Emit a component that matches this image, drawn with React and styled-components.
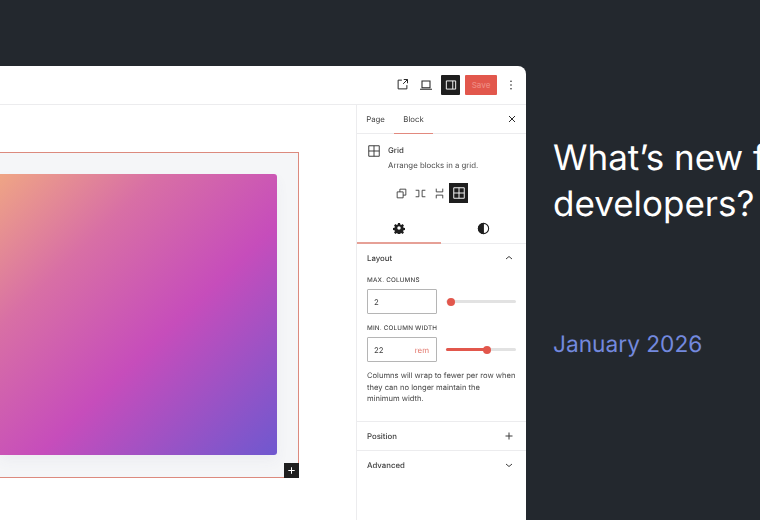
import React from "react";
import styled, { createGlobalStyle } from "styled-components";

const GlobalStyle = createGlobalStyle`
  html, body {
    margin: 0;
    padding: 0;
    background: #23282e;
  }
  * {
    box-sizing: border-box;
  }
`;

const Page = styled.div`
  display: flex;
  width: 760px;
  height: 520px;
  overflow: hidden;
  background: #23282e;
  font-family: Inter, "Liberation Sans", sans-serif;
  text-rendering: geometricPrecision;
`;

const EditorWindow = styled.div`
  display: flex;
  flex-direction: column;
  flex: none;
  width: 526px;
  margin-top: 66px;
  background: #fff;
  border-top-right-radius: 8px;
  overflow: hidden;
  filter: blur(0.3px);
`;

const TopBar = styled.div`
  display: flex;
  align-items: center;
  justify-content: flex-end;
  flex: none;
  height: 39px;
  padding: 0 5px 1px 0;
  border-bottom: 1px solid #ececee;
`;

const BarButton = styled.button`
  display: flex;
  align-items: center;
  justify-content: center;
  width: ${(p) => p.$width || 24}px;
  height: 20px;
  margin-left: ${(p) => p.$gap || 0}px;
  padding: 0;
  border: 0;
  border-radius: 1px;
  color: #2a2a2a;
  background: ${(p) => (p.$active ? "#1e1e1e" : "transparent")};
  ${(p) => p.$active && "color: #fff;"}
`;

const SaveButton = styled.button`
  width: 32px;
  height: 20px;
  margin: 0 4px 0 5px;
  padding: 0;
  border: 0;
  border-radius: 1px;
  background: #e2574c;
  color: #ee8b82;
  font: 500 8px Inter, sans-serif;
`;

const Workspace = styled.div`
  display: flex;
  flex: 1;
  min-height: 0;
`;

const Canvas = styled.div`
  flex: none;
  width: 357px;
  padding: 47px 57px 0 0;
  border-right: 1px solid #ececee;
`;

const GridBlock = styled.div`
  position: relative;
  height: 326px;
  padding: 21px 21px 20px 0;
  background: #f5f6f8;
  border: 1px solid #dc8a7e;
  border-left: 0;
`;

const Artwork = styled.div`
  height: 281px;
  border-radius: 0 3px 3px 0;
  background: linear-gradient(136deg, #efa585 0%, #d86fa5 28%, #c64dbb 58%, #6f58cf 100%);
  box-shadow: 0 6px 14px rgba(70, 70, 110, 0.05);
`;

const AddButton = styled.div`
  position: absolute;
  right: -1px;
  bottom: -1px;
  display: flex;
  align-items: center;
  justify-content: center;
  width: 15px;
  height: 15px;
  background: #1e1e1e;
  color: #fff;
`;

const Sidebar = styled.aside`
  flex: 1;
  min-width: 0;
  color: #2b2b2b;
  font-size: 7.8px;
`;

const TabRow = styled.div`
  display: flex;
  align-items: stretch;
  height: 29px;
  padding: 0 8px 0 0;
  border-bottom: 1px solid #ececee;
`;

const TextTab = styled.div`
  display: flex;
  align-items: center;
  justify-content: center;
  width: ${(p) => p.$width}px;
  margin-bottom: -1px;
  color: #444;
  border-bottom: 1px solid ${(p) => (p.$active ? "#e2897e" : "transparent")};
`;

const CloseWrap = styled.div`
  display: flex;
  align-items: center;
  margin-left: auto;
  color: #2a2a2a;
`;

const BlockCard = styled.div`
  display: grid;
  grid-template-columns: 20px 1fr;
  padding: 10px 0 0 11px;
  height: 82px;
`;

const BlockIcon = styled.div`
  color: #333;
  line-height: 0;
  margin-left: -1px;
`;

const BlockTitle = styled.div`
  font-weight: 500;
  color: #3a3a3a;
  margin-top: 1px;
  line-height: 11px;
`;

const BlockDesc = styled.div`
  margin-top: 4px;
  color: #4c4c4c;
  line-height: 11px;
  white-space: nowrap;
`;

const Variations = styled.div`
  display: flex;
  align-items: center;
  margin: 12px 0 0 4px;
`;

const VariationButton = styled.div`
  display: flex;
  align-items: center;
  justify-content: center;
  width: 19px;
  height: 20px;
  color: ${(p) => (p.$active ? "#fff" : "#333")};
  background: ${(p) => (p.$active ? "#1e1e1e" : "transparent")};
`;

const IconTabs = styled.div`
  display: flex;
  height: 28px;
  border-bottom: 1px solid #ececee;
`;

const IconTab = styled.div`
  display: flex;
  align-items: center;
  justify-content: center;
  flex: none;
  width: ${(p) => p.$width}px;
  margin-bottom: -1px;
  padding-bottom: 2px;
  color: #1e1e1e;
  border-bottom: 2px solid ${(p) => (p.$active ? "#e6a096" : "transparent")};
`;

const Panel = styled.section`
  padding: 0 10px;
  border-bottom: ${(p) => (p.$last ? "0" : "1px solid #ececee")};
`;

const PanelHead = styled.div`
  display: flex;
  align-items: center;
  justify-content: space-between;
  height: 28px;
  padding-right: 1px;
  font-weight: 500;
  color: #3d3d3d;
`;

const FieldLabel = styled.div`
  margin-top: ${(p) => p.$top || 0}px;
  font-size: 6.3px;
  font-weight: 500;
  line-height: 9px;
  letter-spacing: 0.2px;
  color: #4a4a4a;
`;

const FieldRow = styled.div`
  display: flex;
  align-items: center;
  gap: 9px;
  margin-top: 4px;
`;

const NumberBox = styled.div`
  display: flex;
  align-items: center;
  justify-content: space-between;
  flex: none;
  width: 70px;
  height: 25px;
  padding: 0 7px 0 6px;
  border: 1px solid #b5b5b5;
  border-radius: 1px;
  color: #444;
`;

const Unit = styled.span`
  color: #e2766b;
`;

const Slider = styled.div`
  position: relative;
  flex: none;
  width: 70px;
  height: 3px;
  border-radius: 2px;
  background: #e2e2e2;
`;

const SliderFill = styled.div`
  height: 100%;
  border-radius: 2px;
  background: #e2574c;
`;

const SliderThumb = styled.div`
  position: absolute;
  top: -2.5px;
  width: 8px;
  height: 8px;
  margin-left: -4px;
  border-radius: 50%;
  background: #e2574c;
`;

const HelpText = styled.p`
  margin: 8px 0 16px;
  font-size: 7.6px;
  line-height: 11.7px;
  white-space: nowrap;
  color: #474747;
`;

const Intro = styled.div`
  flex: none;
  width: 234px;
  padding: 131px 0 0 27px;
`;

const Headline = styled.h1`
  margin: 0;
  width: 300px;
  padding-top: 4px;
  font-size: 35px;
  font-weight: 400;
  line-height: 46px;
  color: #fff;
`;

const DateLine = styled.div`
  margin-top: 103px;
  font-size: 22.7px;
  line-height: 30px;
  color: #7389de;
`;

const Icon = ({ size = 12, children, fill = "none" }) => (
  <svg
    width={size}
    height={size}
    viewBox="0 0 24 24"
    fill={fill}
    stroke={fill === "none" ? "currentColor" : "none"}
    strokeWidth="1.6"
  >
    {children}
  </svg>
);

const GridIcon = ({ size }) => (
  <Icon size={size}>
    <path d="M3 3h18v18H3zM12 3v18M3 12h18" />
  </Icon>
);

const SliderField = ({ percent }) => (
  <Slider>
    {percent > 10 && <SliderFill style={{ width: `${percent}%` }} />}
    <SliderThumb style={{ left: `${percent}%` }} />
  </Slider>
);

export default function App() {
  return (
    <Page>
      <GlobalStyle />
      <EditorWindow>
        <TopBar>
          <BarButton>
            <Icon size={15}>
              <path d="M11 5H5v14h14v-6M13 11l7-7M14 4h6v6" />
            </Icon>
          </BarButton>
          <BarButton>
            <Icon size={16}>
              <path d="M6 6h12v10H6zM3 18.5h18" />
            </Icon>
          </BarButton>
          <BarButton $active $width={19} $gap={3}>
            <Icon size={14}>
              <path d="M4 5h16v14H4zM15 5v14" />
            </Icon>
          </BarButton>
          <SaveButton>Save</SaveButton>
          <BarButton $width={20}>
            <Icon size={14} fill="currentColor">
              <circle cx="12" cy="5.5" r="1.4" />
              <circle cx="12" cy="12" r="1.4" />
              <circle cx="12" cy="18.5" r="1.4" />
            </Icon>
          </BarButton>
        </TopBar>
        <Workspace>
          <Canvas>
            <GridBlock>
              <Artwork />
              <AddButton>
                <Icon size={11}>
                  <path d="M12 5v14M5 12h14" strokeWidth="2.2" />
                </Icon>
              </AddButton>
            </GridBlock>
          </Canvas>
          <Sidebar>
            <TabRow>
              <TextTab $width={37}>Page</TextTab>
              <TextTab $width={39} $active>Block</TextTab>
              <CloseWrap>
                <Icon size={12}>
                  <path d="M6 6l12 12M18 6L6 18" strokeWidth="2" />
                </Icon>
              </CloseWrap>
            </TabRow>
            <BlockCard>
              <BlockIcon>
                <GridIcon size={14} />
              </BlockIcon>
              <div>
                <BlockTitle>Grid</BlockTitle>
                <BlockDesc>Arrange blocks in a grid.</BlockDesc>
                <Variations>
                  <VariationButton>
                    <Icon size={13}>
                      <path d="M4 9h11v11H4zM9 9V4h11v11h-5" />
                    </Icon>
                  </VariationButton>
                  <VariationButton>
                    <Icon size={13}>
                      <path d="M3 6h6v12H3M21 6h-6v12h6" />
                    </Icon>
                  </VariationButton>
                  <VariationButton>
                    <Icon size={13}>
                      <path d="M6 3v6h12V3M6 21v-6h12v6" />
                    </Icon>
                  </VariationButton>
                  <VariationButton $active>
                    <GridIcon size={14} />
                  </VariationButton>
                </Variations>
              </div>
            </BlockCard>
            <IconTabs>
              <IconTab $width={84} $active>
                <Icon size={12} fill="currentColor">
                  <path
                    fillRule="evenodd"
                    d="M10 2h4l.6 3 1.9.8 2.6-1.7 2.8 2.8-1.7 2.6.8 1.9 3 .6v4l-3 .6-.8 1.9 1.7 2.6-2.8 2.8-2.6-1.7-1.9.8-.6 3h-4l-.6-3-1.9-.8-2.6 1.7-2.8-2.8 1.7-2.6-.8-1.9-3-.6v-4l3-.6.8-1.9-1.7-2.6 2.8-2.8 2.6 1.7 1.9-.8zM12 8.5a3.5 3.5 0 1 0 0 7 3.5 3.5 0 0 0 0-7z"
                  />
                </Icon>
              </IconTab>
              <IconTab $width={85}>
                <Icon size={13}>
                  <circle cx="12" cy="12" r="9.5" strokeWidth="2" />
                  <path d="M12 2.5a9.5 9.5 0 0 0 0 19z" fill="currentColor" />
                </Icon>
              </IconTab>
            </IconTabs>
            <Panel>
              <PanelHead>
                Layout
                <Icon size={12}>
                  <path d="M6 14l6-5 6 5" strokeWidth="2" />
                </Icon>
              </PanelHead>
              <FieldLabel $top={4}>MAX. COLUMNS</FieldLabel>
              <FieldRow>
                <NumberBox>2</NumberBox>
                <SliderField percent={7} />
              </FieldRow>
              <FieldLabel $top={10}>MIN. COLUMN WIDTH</FieldLabel>
              <FieldRow>
                <NumberBox>
                  22 <Unit>rem</Unit>
                </NumberBox>
                <SliderField percent={58} />
              </FieldRow>
              <HelpText>
                Columns will wrap to fewer per row when
                <br />
                they can no longer maintain the
                <br />
                minimum width.
              </HelpText>
            </Panel>
            <Panel>
              <PanelHead>
                Position
                <Icon size={12}>
                  <path d="M12 5v14M5 12h14" strokeWidth="2" />
                </Icon>
              </PanelHead>
            </Panel>
            <Panel $last>
              <PanelHead>
                Advanced
                <Icon size={12}>
                  <path d="M6 10l6 5 6-5" strokeWidth="2" />
                </Icon>
              </PanelHead>
            </Panel>
          </Sidebar>
        </Workspace>
      </EditorWindow>
      <Intro>
        <Headline>What’s new for developers?</Headline>
        <DateLine>January 2026</DateLine>
      </Intro>
    </Page>
  );
}
